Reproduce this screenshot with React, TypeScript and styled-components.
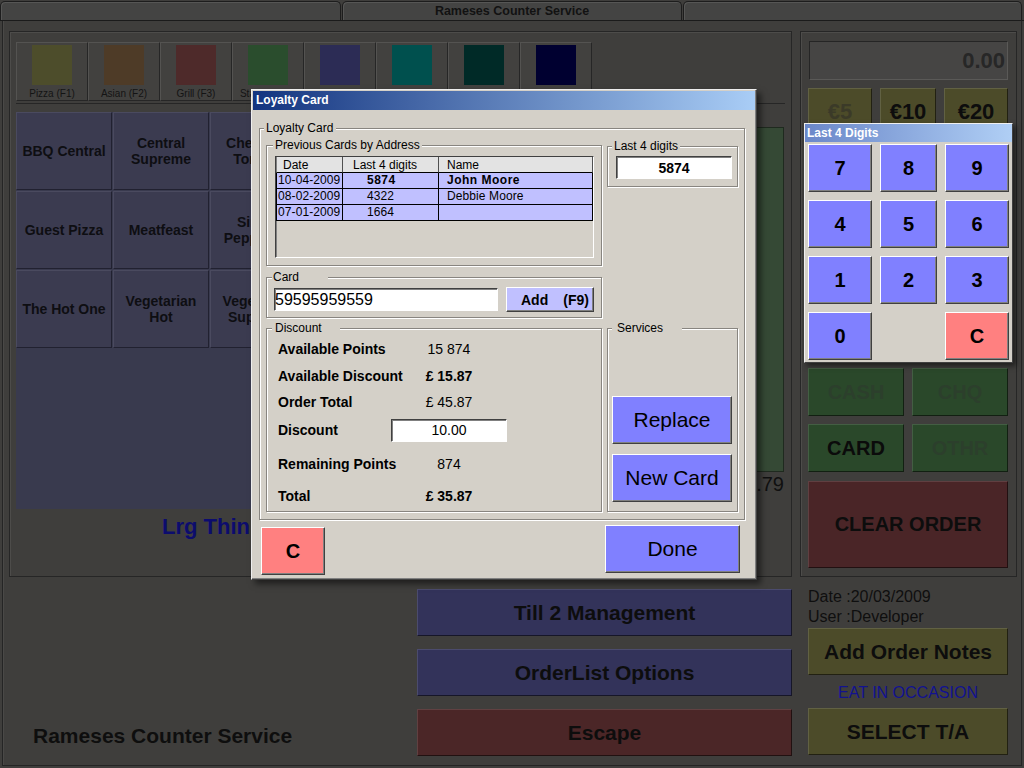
import React from "react";
import styled, { createGlobalStyle } from "styled-components";

const FONT = `"Liberation Sans", Arial, Helvetica, sans-serif`;

const GlobalStyle = createGlobalStyle`
  *, *::before, *::after { box-sizing: border-box; }
  html, body { margin: 0; padding: 0; background: #3f3e3c; }
  body { font-family: ${FONT}; }
`;

/* ---------- page shell ---------- */

const Screen = styled.div`
  position: relative;
  width: 1024px;
  height: 768px;
  overflow: hidden;
  display: flex;
  flex-direction: column;
  background: #3f3e3c;
  font-family: ${FONT};
  color: #0e0e0e;
`;

const TabBar = styled.div`
  flex: none;
  display: flex;
  gap: 1px;
  height: 21px;
  padding: 1px 2px 0 0;
  border-bottom: 1px solid #1b1b1b;
`;

const Tab = styled.div<{ $w?: number }>`
  ${(p) => (p.$w ? `width: ${p.$w}px; flex: none;` : "flex: 1;")}
  background: #444443;
  border: 1px solid #1d1d1d;
  border-bottom: none;
  border-radius: 5px 5px 0 0;
  box-shadow: inset 1px 1px 0 #565655;
  display: flex;
  align-items: center;
  justify-content: center;
  font-size: 12.5px;
  font-weight: bold;
  color: #121212;
`;

const Frame = styled.div`
  flex: 1;
  display: flex;
  flex-direction: column;
  margin: 0 2px 2px;
  padding: 10px 4px 0 6px;
  border: 1px solid #252525;
  border-top: none;
  box-shadow: inset 1px 0 0 #4a4947;
`;

const MainRow = styled.div`
  flex: none;
  display: flex;
  gap: 8px;
  height: 546px;
`;

const Panel = styled.div<{ $w: number }>`
  width: ${(p) => p.$w}px;
  flex: none;
  display: flex;
  flex-direction: column;
  border: 1px solid #262626;
  box-shadow: inset 1px 1px 0 #4d4c4a;
`;

/* ---------- left panel ---------- */

const CategoryRow = styled.div`
  display: flex;
  margin: 10px 6px 0;
  padding-bottom: 2px;
  border-bottom: 1px solid #262626;
`;

const CategoryButton = styled.div`
  width: 72px;
  height: 59px;
  flex: none;
  display: flex;
  flex-direction: column;
  align-items: center;
  background: #42413f;
  border: 1px solid;
  border-color: #545351 #262626 #262626 #545351;
`;

const Swatch = styled.div<{ $color: string }>`
  width: 40px;
  height: 40px;
  margin-top: 2px;
  background: ${(p) => p.$color};
`;

const CategoryLabel = styled.div`
  margin-top: 3px;
  font-size: 10px;
  line-height: 12px;
  color: #141414;
  white-space: nowrap;
`;

const ContentRow = styled.div`
  display: flex;
  gap: 2px;
  margin: 8px 6px 0;
`;

const MenuColumn = styled.div`
  width: 582px;
  flex: none;
`;

const MenuArea = styled.div`
  height: 397px;
  background: #393a4e;
  display: grid;
  grid-template-columns: repeat(6, 96px);
  grid-auto-rows: 78px;
  gap: 1px;
  align-content: start;
  overflow: hidden;
`;

const MenuButton = styled.div`
  display: flex;
  align-items: center;
  justify-content: center;
  text-align: center;
  padding: 0 3px;
  background: #3b3b50;
  border: 1px solid;
  border-color: #4a4a5f #212130 #212130 #4a4a5f;
  font-size: 14px;
  font-weight: bold;
  line-height: 16px;
  color: #0e0e12;
`;

const SizeLabel = styled.div`
  margin-top: 6px;
  padding-left: 146px;
  font-size: 22px;
  font-weight: bold;
  line-height: 24px;
  color: #0c0c6e;
  white-space: nowrap;
`;

const OrderColumn = styled.div`
  width: 184px;
  flex: none;
  padding-top: 15px;
`;

const OrderList = styled.div`
  height: 345px;
  background: #354935;
  border: 1px solid #1f2a1f;
`;

const OrderTotal = styled.div`
  text-align: right;
  font-size: 20px;
  line-height: 24px;
  color: #101010;
`;

/* ---------- right panel ---------- */

const RightPanel = styled(Panel)`
  gap: 8px;
  padding: 9px 8px 7px 7px;
`;

const AmountDisplay = styled.div`
  height: 39px;
  margin-left: 1px;
  padding-right: 2px;
  background: #464544;
  border: 1px solid;
  border-color: #252525 #5a5957 #5a5957 #252525;
  text-align: right;
  font-size: 22px;
  font-weight: bold;
  line-height: 37px;
  color: #272727;
`;

const TillGrid = styled.div`
  display: grid;
  grid-template-columns: 64px 56px 64px;
  grid-auto-rows: 48px;
  gap: 8px;
`;

const PayGrid = styled.div`
  display: grid;
  grid-template-columns: 96px 96px;
  grid-auto-rows: 48px;
  gap: 8px;
`;

const DimButton = styled.div<{ $bg: string; $fg?: string; $size?: number; $h?: number }>`
  display: flex;
  align-items: center;
  justify-content: center;
  ${(p) => (p.$h ? `height: ${p.$h}px; flex: none;` : "")}
  background: ${(p) => p.$bg};
  color: ${(p) => p.$fg || "#0d0d0d"};
  border: 1px solid;
  border-color: rgba(255, 255, 255, 0.12) rgba(0, 0, 0, 0.55) rgba(0, 0, 0, 0.55)
    rgba(255, 255, 255, 0.12);
  font-size: ${(p) => p.$size || 21}px;
  font-weight: bold;
  white-space: nowrap;
`;

const ClearOrderButton = styled(DimButton)`
  margin-top: 1px;
`;

/* ---------- bottom area ---------- */

const BottomRow = styled.div`
  flex: 1;
  display: flex;
`;

const BottomTitle = styled.div`
  width: 408px;
  flex: none;
  display: flex;
  align-items: flex-end;
  padding: 0 0 17px 24px;
  font-size: 21px;
  font-weight: bold;
  line-height: 24px;
  color: #0e0e0e;
`;

const ActionColumn = styled.div`
  width: 375px;
  flex: none;
  display: flex;
  flex-direction: column;
  gap: 13px;
  padding-top: 12px;
`;

const InfoColumn = styled.div`
  width: 200px;
  flex: none;
  margin-left: 16px;
  padding-top: 10px;
  display: flex;
  flex-direction: column;
`;

const InfoLine = styled.div`
  font-size: 16px;
  line-height: 20px;
  color: #0f0f0f;
`;

const OccasionLine = styled.div`
  margin: 8px 0 5px;
  text-align: center;
  font-size: 16px;
  line-height: 20px;
  color: #121290;
`;

const NotesButton = styled(DimButton)`
  margin-top: 1px;
`;

/* ---------- dialog ---------- */

const Dialog = styled.div`
  position: absolute;
  left: 251px;
  top: 89px;
  width: 506px;
  padding: 1px;
  background: #d4d0c8;
  border: 1px solid;
  border-color: #eeeeee #404040 #404040 #eeeeee;
  box-shadow: inset -1px -1px 0 #808080, 4px 4px 6px rgba(0, 0, 0, 0.5);
  font-family: ${FONT};
  color: #000;
`;

const TitleBar = styled.div<{ $from: string; $to: string; $h: number; $pl: number }>`
  height: ${(p) => p.$h}px;
  line-height: ${(p) => p.$h}px;
  padding-left: ${(p) => p.$pl}px;
  background: linear-gradient(to right, ${(p) => p.$from}, ${(p) => p.$to});
  color: #fff;
  font-size: 12px;
  font-weight: bold;
  white-space: nowrap;
`;

const GroupBox = styled.div<{ $p: string; $h?: number; $mt?: number }>`
  position: relative;
  flex: none;
  padding: ${(p) => p.$p};
  ${(p) => (p.$h ? `height: ${p.$h}px;` : "")}
  margin-top: ${(p) => p.$mt || 0}px;
  border: 1px solid #888580;
  box-shadow: 1px 1px 0 #ffffff, inset 1px 1px 0 #ffffff;
`;

const OuterGroup = styled(GroupBox)`
  margin: 18px 10px 0 6px;
`;

const ServicesGroup = styled(GroupBox)`
  display: flex;
  flex-direction: column;
  justify-content: flex-end;
  gap: 10px;
`;

const Caption = styled.span<{ $x: number; $pl: number; $pr: number }>`
  position: absolute;
  top: -8px;
  left: ${(p) => p.$x}px;
  padding: 0 ${(p) => p.$pr}px 0 ${(p) => p.$pl}px;
  background: #d4d0c8;
  font-size: 12px;
  line-height: 14px;
  white-space: nowrap;
`;

const GroupColumns = styled.div`
  display: flex;
  gap: 5px;
`;

const LeftColumn = styled.div`
  width: 336px;
  flex: none;
  display: flex;
  flex-direction: column;
`;

const RightColumn = styled.div`
  width: 131px;
  flex: none;
  display: flex;
  flex-direction: column;
  justify-content: space-between;
  padding-top: 1px;
`;

const TableFrame = styled.div`
  height: 102px;
  background: #d4d0c8;
  border: 1px solid;
  border-color: #404040 #ffffff #ffffff #404040;
  box-shadow: inset 1px 1px 0 #808080;
`;

const CardsTable = styled.div`
  width: 317px;
  display: grid;
  grid-template-columns: 67px 96px 154px;
  grid-auto-rows: 16px;
`;

const HeadCell = styled.div<{ $pl: number }>`
  padding-left: ${(p) => p.$pl}px;
  padding-top: 1px;
  background: #e3e3e3;
  border-right: 1px solid #505050;
  border-bottom: 1px solid #000;
  font-size: 12px;
  line-height: 15px;
  white-space: nowrap;
  overflow: hidden;
  &:first-child { border-left: 1px solid #808080; }
`;

const Cell = styled.div<{ $pl: number; $bold?: boolean; $first?: boolean }>`
  padding-left: ${(p) => p.$pl}px;
  background: #c0c0ff;
  border-right: 1px solid #000;
  border-bottom: 1px solid #000;
  ${(p) => (p.$first ? "border-left: 1px solid #000;" : "")}
  font-size: 12px;
  line-height: 15px;
  font-weight: ${(p) => (p.$bold ? "bold" : "normal")};
  letter-spacing: ${(p) => (p.$bold ? "0.5px" : "0.1px")};
  white-space: nowrap;
  overflow: hidden;
`;

const CardRow = styled.div`
  display: flex;
  align-items: center;
  gap: 8px;
  height: 25px;
`;

const Field = styled.input<{ $w: number; $size: number; $bold?: boolean; $align: string }>`
  width: ${(p) => p.$w}px;
  height: 23px;
  flex: none;
  margin: 0;
  padding: 0;
  background: #fff;
  border: 1px solid;
  border-color: #404040 #ffffff #ffffff #404040;
  box-shadow: inset 1px 1px 0 #808080;
  outline: none;
  font-family: ${FONT};
  font-size: ${(p) => p.$size}px;
  font-weight: ${(p) => (p.$bold ? "bold" : "normal")};
  text-align: ${(p) => p.$align};
  color: #000;
`;

const RaisedButton = styled.button<{ $bg: string; $w: number; $h: number; $size: number; $bold?: boolean }>`
  width: ${(p) => p.$w}px;
  height: ${(p) => p.$h}px;
  flex: none;
  margin: 0;
  padding: 0;
  display: flex;
  align-items: center;
  justify-content: center;
  background: ${(p) => p.$bg};
  border: 1px solid;
  border-color: #ffffff #404040 #404040 #ffffff;
  box-shadow: inset -1px -1px 0 #808080;
  font-family: ${FONT};
  font-size: ${(p) => p.$size}px;
  font-weight: ${(p) => (p.$bold ? "bold" : "normal")};
  color: #000;
  cursor: default;
`;

const AddButton = styled(RaisedButton)`
  justify-content: flex-start;
  gap: 15px;
  padding-left: 14px;
`;

const DiscountRow = styled.div<{ $h: number }>`
  height: ${(p) => p.$h}px;
  display: grid;
  grid-template-columns: 113px 116px;
  align-items: center;
`;

const RowLabel = styled.div`
  font-size: 14px;
  font-weight: bold;
  white-space: nowrap;
`;

const RowValue = styled.div<{ $bold?: boolean }>`
  text-align: center;
  font-size: 14px;
  font-weight: ${(p) => (p.$bold ? "bold" : "normal")};
  white-space: pre;
`;

const DialogFooter = styled.div`
  display: flex;
  justify-content: space-between;
  align-items: flex-start;
  padding: 5px 15px 3px 8px;
`;

const ClearKey = styled(RaisedButton)`
  margin-top: 2px;
`;

/* ---------- keypad popup ---------- */

const Keypad = styled.div`
  position: absolute;
  left: 804px;
  top: 123px;
  width: 209px;
  background: #d4d0c8;
  border: 1px solid;
  border-color: #f0f0f0 #404040 #404040 #f0f0f0;
  box-shadow: 3px 3px 5px rgba(0, 0, 0, 0.5);
  font-family: ${FONT};
`;

const KeypadGrid = styled.div`
  display: grid;
  grid-template-columns: 64px 57px 64px;
  grid-auto-rows: 48px;
  gap: 8px;
  padding: 2px 3px;
`;

/* ---------- data ---------- */

const categories = [
  { label: "Pizza (F1)", color: "#4d4d2b" },
  { label: "Asian (F2)", color: "#4e3b27" },
  { label: "Grill (F3)", color: "#4e2a2a" },
  { label: "Starters (F4)", color: "#2a4d2d" },
  { label: "Drinks (F5)", color: "#2c2c55" },
  { label: "Sides (F6)", color: "#00504e" },
  { label: "Extras (F7)", color: "#002a27" },
  { label: "Deals (F8)", color: "#000030" },
];

const menuItems = [
  "BBQ Central", "Central Supreme", "Cheese & Tomato", "", "", "",
  "Guest Pizza", "Meatfeast", "Single Pepperoni", "", "", "",
  "The Hot One", "Vegetarian Hot", "Vegetarian Supreme", "", "", "",
];

const previousCards = [
  { date: "10-04-2009", digits: "5874", name: "John Moore", bold: true },
  { date: "08-02-2009", digits: "4322", name: "Debbie Moore", bold: false },
  { date: "07-01-2009", digits: "1664", name: "", bold: false },
];

const OLIVE = "#4c4b29";

const tillKeys = [
  { t: "€5", fg: "#3b3a28", bg: OLIVE },
  { t: "€10", fg: "#0d0d0d", bg: OLIVE },
  { t: "€20", fg: "#0d0d0d", bg: OLIVE },
  ...Array.from({ length: 12 }, () => ({ t: "", fg: "#0d0d0d", bg: "#33335a" })),
];

const payKeys = [
  { t: "CASH", fg: "#2c3f2c" },
  { t: "CHQ", fg: "#2c3f2c" },
  { t: "CARD", fg: "#0b0b0b" },
  { t: "OTHR", fg: "#2c3f2c" },
];

const keypadKeys = ["7", "8", "9", "4", "5", "6", "1", "2", "3", "0", "", "C"];

export default function App() {
  return (
    <>
      <GlobalStyle />
      <Screen>
        <TabBar>
          <Tab $w={341} />
          <Tab $w={340}>Rameses Counter Service</Tab>
          <Tab />
        </TabBar>

        <Frame>
          <MainRow>
            <Panel $w={783}>
              <CategoryRow>
                {categories.map((c) => (
                  <CategoryButton key={c.label}>
                    <Swatch $color={c.color} />
                    <CategoryLabel>{c.label}</CategoryLabel>
                  </CategoryButton>
                ))}
              </CategoryRow>
              <ContentRow>
                <MenuColumn>
                  <MenuArea>
                    {menuItems.map((m, i) => (
                      <MenuButton key={i}>{m}</MenuButton>
                    ))}
                  </MenuArea>
                  <SizeLabel>Lrg Thin Crust</SizeLabel>
                </MenuColumn>
                <OrderColumn>
                  <OrderList />
                  <OrderTotal>£ 33.79</OrderTotal>
                </OrderColumn>
              </ContentRow>
            </Panel>

            <RightPanel $w={217}>
              <AmountDisplay>0.00</AmountDisplay>
              <TillGrid>
                {tillKeys.map((k, i) => (
                  <DimButton key={i} $bg={k.bg} $fg={k.fg} $size={22}>
                    {k.t}
                  </DimButton>
                ))}
              </TillGrid>
              <PayGrid>
                {payKeys.map((k) => (
                  <DimButton key={k.t} $bg="#2a482a" $fg={k.fg} $size={20}>
                    {k.t}
                  </DimButton>
                ))}
              </PayGrid>
              <ClearOrderButton $bg="#4a2527" $h={87} $size={20}>
                CLEAR ORDER
              </ClearOrderButton>
            </RightPanel>
          </MainRow>

          <BottomRow>
            <BottomTitle>Rameses Counter Service</BottomTitle>
            <ActionColumn>
              <DimButton $bg="#33335a" $h={47}>Till 2 Management</DimButton>
              <DimButton $bg="#33335a" $h={47}>OrderList Options</DimButton>
              <DimButton $bg="#4b2627" $h={47}>Escape</DimButton>
            </ActionColumn>
            <InfoColumn>
              <InfoLine>Date :20/03/2009</InfoLine>
              <InfoLine>User :Developer</InfoLine>
              <NotesButton $bg={OLIVE} $h={47}>Add Order Notes</NotesButton>
              <OccasionLine>EAT IN OCCASION</OccasionLine>
              <DimButton $bg={OLIVE} $h={47}>SELECT T/A</DimButton>
            </InfoColumn>
          </BottomRow>
        </Frame>

        <Dialog>
          <TitleBar $from="#13347f" $to="#a9cdf6" $h={19} $pl={3}>
            Loyalty Card
          </TitleBar>
          <OuterGroup $p="16px 6px 7px">
            <Caption $x={4} $pl={2} $pr={3}>Loyalty Card</Caption>
            <GroupColumns>
              <LeftColumn>
                <GroupBox $p="10px 7px 7px 8px">
                  <Caption $x={6} $pl={2} $pr={2}>Previous Cards by Address</Caption>
                  <TableFrame>
                    <CardsTable>
                      <HeadCell $pl={6}>Date</HeadCell>
                      <HeadCell $pl={10}>Last 4 digits</HeadCell>
                      <HeadCell $pl={8}>Name</HeadCell>
                      {previousCards.map((r) => (
                        <React.Fragment key={r.date}>
                          <Cell $pl={1} $first>{r.date}</Cell>
                          <Cell $pl={24} $bold={r.bold}>{r.digits}</Cell>
                          <Cell $pl={8} $bold={r.bold}>{r.name}</Cell>
                        </React.Fragment>
                      ))}
                    </CardsTable>
                  </TableFrame>
                </GroupBox>

                <GroupBox $p="9px 7px 5px 7px" $mt={11}>
                  <Caption $x={5} $pl={1} $pr={29}>Card</Caption>
                  <CardRow>
                    <Field $w={224} $size={16} $align="left" readOnly defaultValue="59595959559" />
                    <AddButton $bg="#c0c0ff" $w={88} $h={25} $size={14} $bold>
                      <span>Add</span>
                      <span>(F9)</span>
                    </AddButton>
                  </CardRow>
                </GroupBox>

                <GroupBox $p="6px 0 2px 11px" $mt={10} $h={184}>
                  <Caption $x={5} $pl={3} $pr={18}>Discount</Caption>
                  <DiscountRow $h={28}>
                    <RowLabel>Available Points</RowLabel>
                    <RowValue>15 874</RowValue>
                  </DiscountRow>
                  <DiscountRow $h={26}>
                    <RowLabel>Available Discount</RowLabel>
                    <RowValue $bold>£ 15.87</RowValue>
                  </DiscountRow>
                  <DiscountRow $h={26}>
                    <RowLabel>Order Total</RowLabel>
                    <RowValue>£ 45.87</RowValue>
                  </DiscountRow>
                  <DiscountRow $h={30}>
                    <RowLabel>Discount</RowLabel>
                    <Field $w={116} $size={14} $align="center" readOnly defaultValue="10.00" />
                  </DiscountRow>
                  <DiscountRow $h={38}>
                    <RowLabel>Remaining Points</RowLabel>
                    <RowValue>874</RowValue>
                  </DiscountRow>
                  <DiscountRow $h={26}>
                    <RowLabel>Total</RowLabel>
                    <RowValue $bold>£ 35.87</RowValue>
                  </DiscountRow>
                </GroupBox>
              </LeftColumn>

              <RightColumn>
                <GroupBox $p="9px 5px 7px 8px">
                  <Caption $x={4} $pl={2} $pr={2}>Last 4 digits</Caption>
                  <Field $w={116} $size={14} $bold $align="center" readOnly defaultValue="5874" />
                </GroupBox>
                <ServicesGroup $p="0 5px 9px 4px" $h={184}>
                  <Caption $x={4} $pl={5} $pr={19}>Services</Caption>
                  <RaisedButton $bg="#8080ff" $w={120} $h={48} $size={21}>Replace</RaisedButton>
                  <RaisedButton $bg="#8080ff" $w={120} $h={48} $size={21}>New Card</RaisedButton>
                </ServicesGroup>
              </RightColumn>
            </GroupColumns>
          </OuterGroup>
          <DialogFooter>
            <ClearKey $bg="#ff8080" $w={64} $h={48} $size={20} $bold>C</ClearKey>
            <RaisedButton $bg="#8080ff" $w={135} $h={48} $size={21}>Done</RaisedButton>
          </DialogFooter>
        </Dialog>

        <Keypad>
          <TitleBar $from="#6a87c9" $to="#b0cff5" $h={18} $pl={2}>
            Last 4 Digits
          </TitleBar>
          <KeypadGrid>
            {keypadKeys.map((k, i) =>
              k === "" ? (
                <span key={i} />
              ) : (
                <RaisedButton
                  key={i}
                  $bg={k === "C" ? "#ff8080" : "#8080ff"}
                  $w={i % 3 === 1 ? 57 : 64}
                  $h={48}
                  $size={20}
                  $bold
                >
                  {k}
                </RaisedButton>
              )
            )}
          </KeypadGrid>
        </Keypad>
      </Screen>
    </>
  );
}
